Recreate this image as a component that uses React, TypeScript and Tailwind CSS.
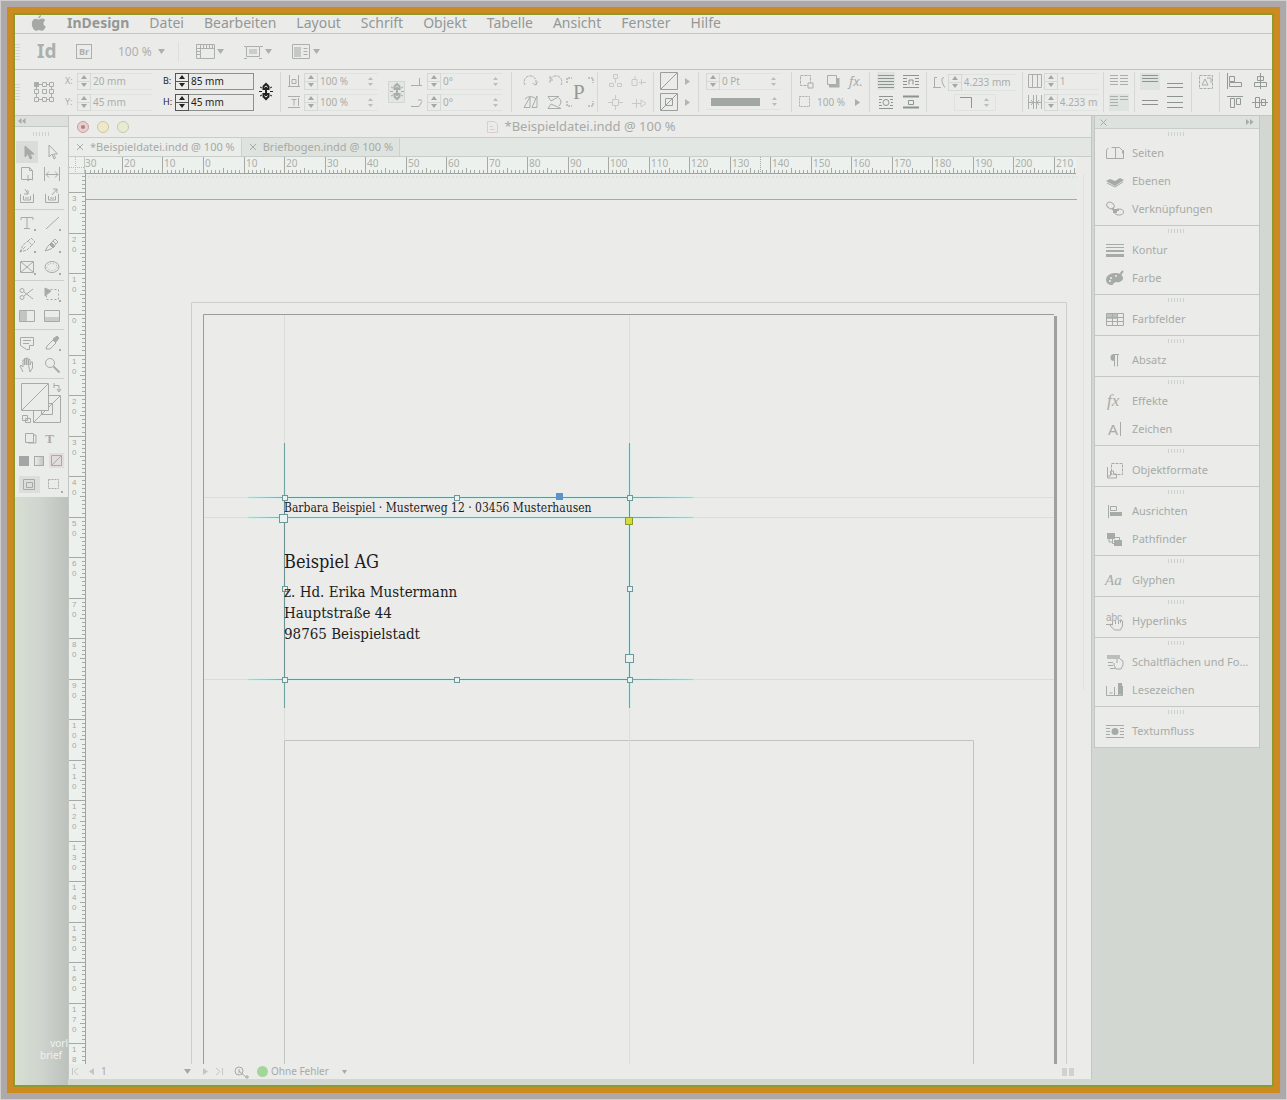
import type { ReactNode } from "react";

/* ---------- small building blocks ---------- */

function Icon({ w = 16, h = 16, className = "", children }: { w?: number; h?: number; className?: string; children: ReactNode }) {
  return (
    <svg width={w} height={h} viewBox={`0 0 ${w} ${h}`} fill="none" stroke="currentColor" strokeWidth="1" aria-hidden="true" className={`shrink-0 overflow-visible ${className}`}>
      {children}
    </svg>
  );
}

function IconButton({ label, className = "", children }: { label: string; className?: string; children: ReactNode }) {
  return (
    <button type="button" aria-label={label} title={label} className={`flex shrink-0 items-center justify-center ${className}`}>
      {children}
    </button>
  );
}

function Down() {
  return (
    <Icon w={7} h={5}>
      <path d="M0 0h7L3.500 5z" fill="currentColor" stroke="none" />
    </Icon>
  );
}

function UpDown() {
  return (
    <Icon w={5} h={9} className="text-[#b9beb9]">
      <path d="M2.500 0 5 3H0zM2.500 9 0 6h5z" fill="currentColor" stroke="none" />
    </Icon>
  );
}

function Divider() {
  return <span className="h-[40px] w-px shrink-0 bg-[#d5d9d5]" />;
}

function Pair({ className = "", children }: { className?: string; children: ReactNode }) {
  return <div className={`grid shrink-0 grid-rows-[19px_19px] items-center gap-[2px] ${className}`}>{children}</div>;
}

function Stepper({ name, dark }: { name: string; dark?: boolean }) {
  return (
    <span className={`flex h-[17px] w-[14px] shrink-0 flex-col border ${dark ? "border-[#555] text-[#222]" : "border-[#d5d9d5] text-[#a3a8a3]"}`}>
      <button type="button" aria-label={`${name} erhöhen`} className={`flex flex-1 items-center justify-center border-b ${dark ? "border-[#555]" : "border-[#d5d9d5]"}`}>
        <Icon w={6} h={4}><path d="M0 4h6L3 0z" fill="currentColor" stroke="none" /></Icon>
      </button>
      <button type="button" aria-label={`${name} verringern`} className="flex flex-1 items-center justify-center">
        <Icon w={6} h={4}><path d="M0 0h6L3 4z" fill="currentColor" stroke="none" /></Icon>
      </button>
    </span>
  );
}

function Field({ name, label, icon, value, dark, menu, width }: { name: string; label?: string; icon?: ReactNode; value: string; dark?: boolean; menu?: boolean; width: string }) {
  return (
    <div className={`flex h-[19px] items-center ${dark ? "text-[#1d1d1d]" : "text-[#a9aea9]"}`}>
      {label ? <label htmlFor={name} className="w-[12px] shrink-0 text-[9px]">{label}</label> : null}
      {icon ? <span className="flex w-[16px] shrink-0 items-center">{icon}</span> : null}
      <Stepper name={name} dark={dark} />
      <span className={`flex h-[17px] items-center border-y border-r ${width} ${dark ? "border-[#8d918d]" : "border-[#dfe3df] border-r-transparent"}`}>
        <input id={name} aria-label={name} defaultValue={value} className="w-full min-w-0 bg-transparent pl-[2px] text-[10px] outline-none" />
        {menu ? <span className="pr-1"><UpDown /></span> : null}
      </span>
    </div>
  );
}

function Grip() {
  return (
    <Icon w={18} h={4} className="text-[#cdd1cd]">
      <path d="M.5 0v4M3.500 0v4M6.500 0v4M9.500 0v4M12.500 0v4M15.500 0v4" />
    </Icon>
  );
}

function SideGrip() {
  return (
    <Icon w={5} h={17} className="text-[#d3d7d3]">
      <path d="M0 1.500h5M0 4.500h5M0 7.500h5M0 10.500h5M0 13.500h5M0 16.500h5" />
    </Icon>
  );
}

/* ---------- menu and application bars ---------- */

const menus = ["Datei", "Bearbeiten", "Layout", "Schrift", "Objekt", "Tabelle", "Ansicht", "Fenster", "Hilfe"];

function MenuBar() {
  return (
    <nav className="flex h-[19px] items-center border-b border-[#c3c6c3] pb-[2px] pl-4 text-[14px] leading-[16px] text-[#939895]">
      <button type="button" aria-label="Apple" className="mr-[20px] text-[#a5a9a6]">
        <Icon w={16} h={16}>
          <path d="M10 0c.2 1.700-1 3.300-2.600 3.500C7.200 1.900 8.500.4 10 0zM7.800 4.500c.8 0 1.800-.9 3.300-.9 1.300 0 2.500.7 3.200 1.700-2.700 1.600-2.300 5.200.5 6.300-.6 1.700-2.100 4.100-3.600 4.100-1.200 0-1.700-.8-3.200-.8-1.400 0-2 .8-3.100.8C3 15.700.8 12 .8 8.700c0-3.200 2-5 4-5 1.300 0 2.300.8 3 .8z" fill="currentColor" stroke="none" />
        </Icon>
      </button>
      <button type="button" className="mr-[20px] font-bold">InDesign</button>
      <div className="flex gap-[20px]">
        {menus.map((m) => (
          <button key={m} type="button">{m}</button>
        ))}
      </div>
    </nav>
  );
}

function AppBar() {
  return (
    <div className="flex h-[36px] items-center border-b border-[#bfc3bf] text-[#acb0ac]">
      <span className="w-[22px]"><SideGrip /></span>
      <span className="w-[39px] text-[19px] leading-none font-bold">Id</span>
      <button type="button" className="flex h-[15px] w-[16px] items-center justify-center border border-[#acb0ac] text-[9px] font-bold">Br</button>
      <label className="ml-[26px] flex items-center text-[12px]">
        <select aria-label="Zoomstufe" className="w-[40px] appearance-none bg-transparent" defaultValue="100 %">
          <option>100 %</option>
        </select>
        <Down />
      </label>
      <span className="mr-[17px] ml-[13px] h-[20px] w-px bg-[#dcdfdc]" />
      <div className="flex gap-[20px]">
        <IconButton label="Anzeigeoptionen" className="gap-[2px]">
          <Icon w={19} h={16}>
            <path d="M.5.5h18v4H.5zM.5.5h4v14h-4zM4.500 14.500h14v-10M7.500 1v3M10.500 1v3M13.500 1v3M16.500 1v3M1 7.500h3M1 10.500h3" />
          </Icon>
          <Down />
        </IconButton>
        <IconButton label="Bildschirmmodus" className="gap-[2px]">
          <Icon w={19} h={16}>
            <path d="M2.500 2.500h13v10h-13zM0 2.500h2M16 2.500h3M0 14.500h3M15 14.500h3" />
            <path d="M5 5h8v5H5z" fill="currentColor" opacity=".5" stroke="none" />
          </Icon>
          <Down />
        </IconButton>
        <IconButton label="Dokumente anordnen" className="gap-[2px]">
          <Icon w={19} h={16}>
            <path d="M.5.5h17v14H.5zM11.500 4.500h4M11.500 7.500h4M11.500 10.500h4" />
            <path d="M2 3h7v10H2z" fill="currentColor" opacity=".6" stroke="none" />
          </Icon>
          <Down />
        </IconButton>
      </div>
    </div>
  );
}

/* ---------- control panel ---------- */

function Chain() {
  return (
    <Icon w={14} h={17}>
      <path d="M4.500 7V3.500L7 1l2.500 2.500V7M4.500 10v3.500L7 16l2.500-2.500V10" strokeWidth="2" />
      <path d="M7 4v9M5 6h4M5 11h4" strokeWidth="2" />
      <path d="M1 4l2 1M0 8.500h3M1 13l2-1M13 4l-2 1M14 8.500h-3M13 13l-2-1" />
    </Icon>
  );
}

function ControlBar() {
  return (
    <div className="flex h-[46px] items-center overflow-hidden border-b border-[#c3c7c3] pb-[2px] text-[#a9aea9]">
      <span className="w-[19px] shrink-0"><SideGrip /></span>
      <IconButton label="Bezugspunkt" className="mr-[11px]">
        <Icon w={20} h={20}>
          <path d="M.5.5h4v4h-4z" fill="currentColor" />
          <path d="M8.500.5h4v4h-4zM15.500.5h4v4h-4zM.5 7.500h4v4h-4zM8.500 7.500h4v4h-4zM15.500 7.500h4v4h-4zM.5 15.500h4v4h-4zM8.500 15.500h4v4h-4zM15.500 15.500h4v4h-4zM5 2.500h3M13 2.500h2M5 17.500h3M13 17.500h2M2.500 5v2M2.500 12v3M17.500 5v2M17.500 12v3" />
        </Icon>
      </IconButton>
      <Pair className="mr-[10px]">
        <Field name="X-Position" label="X:" value="20 mm" width="w-[62px]" />
        <Field name="Y-Position" label="Y:" value="45 mm" width="w-[62px]" />
      </Pair>
      <Pair className="mr-[5px]">
        <Field name="Breite" label="B:" value="85 mm" dark width="w-[65px]" />
        <Field name="Höhe" label="H:" value="45 mm" dark width="w-[65px]" />
      </Pair>
      <IconButton label="Proportionen" className="mr-[7px] text-[#222]"><Chain /></IconButton>
      <Divider />
      <Pair className="ml-[7px] mr-[10px]">
        <Field name="Skalierung X" value="100 %" menu width="w-[60px]" icon={<Icon w={12} h={12}><path d="M1.500 0v12M10.500 0v12M0 11.500h12M4 4.500h4v4H4z" /></Icon>} />
        <Field name="Skalierung Y" value="100 %" menu width="w-[60px]" icon={<Icon w={12} h={12}><path d="M0 .5h12M0 11.500h12M3.500 3.500h5M6 3.500v6M10.500 2v8" /></Icon>} />
      </Pair>
      <IconButton label="Skalierung verknüpfen" className="mr-[6px] h-[22px] w-[17px] border border-[#d3d7d3] bg-[#e3e6e3]"><Chain /></IconButton>
      <Pair className="mr-[8px]">
        <Field name="Drehwinkel" value="0°" menu width="w-[62px]" icon={<Icon w={12} h={12}><path d="M0 10.500h11M8.500 3v7" /></Icon>} />
        <Field name="Scherwinkel" value="0°" menu width="w-[62px]" icon={<Icon w={12} h={12}><path d="M0 10.500h8l3-5M7 4h4" /></Icon>} />
      </Pair>
      <Divider />
      <Pair className="ml-[6px] mr-[2px] grid-cols-[26px_18px]">
        <IconButton label="Im Uhrzeigersinn drehen"><Icon><path d="M2 12A6 6 0 1 1 13 10M13 12l2-4M13 12l-4-2" strokeDasharray="3 1" /></Icon></IconButton>
        <IconButton label="Gegen Uhrzeigersinn drehen"><Icon><path d="M14 12A6 6 0 1 0 3 10M3 3v4h4" strokeDasharray="3 1" /></Icon></IconButton>
        <IconButton label="Horizontal spiegeln"><Icon><path d="M1 13.500 7 3v10.500zM9 13.500h5V2zM2 5q5-5 11 0" /></Icon></IconButton>
        <IconButton label="Vertikal spiegeln"><Icon><path d="M1 2.500h11L4 7zM1 14.500h13L4 10zM12 4q4 4 0 8" /></Icon></IconButton>
      </Pair>
      <IconButton label="Zeichenattribute" className="mr-[3px]">
        <Icon w={28} h={30} className="text-[#949995]">
          <path d="M1 6V1h5M22 1h5v5M1 24v5h5M22 29h5v-5" strokeDasharray="2 1" />
          <text x="7" y="22" fontSize="21" fontFamily="Liberation Serif, serif" fill="currentColor" stroke="none">P</text>
        </Icon>
      </IconButton>
      <Divider />
      <Pair className="ml-[5px] mr-[3px] grid-cols-[23px_22px] text-[#c6cbc6]">
        <IconButton label="Container auswählen"><Icon><path d="M6.500 1.500h4v4h-4zM8.500 6v4M2.500 10.500h4v3h-4zM10.500 10.500h4v3h-4z" /></Icon></IconButton>
        <IconButton label="Vorheriges Objekt"><Icon><path d="M1 6.500h5v6H1zM10.500 6v6M8 9.500h7M4 3v3" /></Icon></IconButton>
        <IconButton label="Inhalt auswählen"><Icon><path d="M5.500 5.500h6v6h-6zM8.500 1v4M8.500 12v4M1 8.500h4M12 8.500h4" /></Icon></IconButton>
        <IconButton label="Nächstes Objekt"><Icon><path d="M1 9.500h9M5.500 5v9M10 6v7l5-3.500z" /></Icon></IconButton>
      </Pair>
      <Divider />
      <Pair className="ml-[6px] mr-[4px] grid-cols-[18px_14px] gap-x-[2px] text-[#9b9f9b]">
        <IconButton label="Fläche"><Icon w={18} h={18}><path d="M.5.5h17v17H.5zM1 17 17 1" /></Icon></IconButton>
        <IconButton label="Flächenmenü"><Icon w={5} h={7} className="text-[#b3b7b3]"><path d="M0 0v7l5-3.500z" fill="currentColor" stroke="none" /></Icon></IconButton>
        <IconButton label="Kontur"><Icon w={18} h={18}><path d="M.5.5h17v17H.5zM5.500 5.500h7v7h-7zM1 17 17 1" /></Icon></IconButton>
        <IconButton label="Konturmenü"><Icon w={5} h={7} className="text-[#b3b7b3]"><path d="M0 0v7l5-3.500z" fill="currentColor" stroke="none" /></Icon></IconButton>
      </Pair>
      <Divider />
      <Pair className="ml-[7px] mr-[10px]">
        <Field name="Konturstärke" value="0 Pt" menu width="w-[61px]" />
        <button type="button" aria-label="Konturtyp" className="flex h-[15px] items-center gap-[12px] border-b border-[#dfe3df] pl-[5px]">
          <span className="h-[8px] w-[49px] bg-[#a3a7a3]" />
          <UpDown />
        </button>
      </Pair>
      <Divider />
      <div className="mr-[6px] ml-[7px] flex shrink-0 flex-col gap-[2px]">
        <div className="flex h-[19px] items-center gap-[9px]">
          <IconButton label="Eckenoptionen"><Icon><path d="M1.500 2.500h10v10h-10z" strokeDasharray="3 1" /><path d="M9 10h5v5H9z" fill="#ebebea" /></Icon></IconButton>
          <IconButton label="Schlagschatten"><Icon><path d="M3.500 2.500h9v9h-9z" /><path d="M5 13h9V5" strokeWidth="3" /></Icon></IconButton>
          <button type="button" className="text-[13px] leading-none italic">fx.</button>
        </div>
        <div className="flex h-[19px] items-center">
          <Icon w={18} h={12}><path d="M.5.5h10v10H.5z" strokeDasharray="2 1" /></Icon>
          <input aria-label="Deckkraft" defaultValue="100 %" className="w-[38px] bg-transparent text-[10px] outline-none" />
          <Icon w={5} h={7}><path d="M0 0v7l5-3.500z" fill="currentColor" stroke="none" /></Icon>
        </div>
      </div>
      <Divider />
      <Pair className="mr-[6px] ml-[7px] grid-cols-[18px_18px] gap-x-[7px] text-[#8f938f]">
        <IconButton label="Kein Umfluss" className="h-[18px] bg-[#dfe3df]"><Icon><path d="M0 2.500h16M0 5.500h16M0 8.500h16M0 11.500h16M0 14.500h16" /></Icon></IconButton>
        <IconButton label="Umfluss Rahmen"><Icon><path d="M0 2.500h16M0 5.500h4M12 5.500h4M0 8.500h4M12 8.500h4M0 11.500h4M12 11.500h4M0 14.500h16M6 11.500V7h4v4.500" /></Icon></IconButton>
        <IconButton label="Umfluss Form"><Icon><path d="M1 2.500h14M1 5.500h3M12 5.500h3M1 8.500h2M13 8.500h2M1 11.500h3M12 11.500h3M1 14.500h14" /><circle cx="8" cy="8.500" r="3" /></Icon></IconButton>
        <IconButton label="Objekt überspringen"><Icon><path d="M0 2.500h16M0 13.500h16" strokeWidth="2" /><path d="M5.500 10.500V6.500h5v4z" /></Icon></IconButton>
      </Pair>
      <Divider />
      <div className="mr-[5px] ml-[5px] flex shrink-0 flex-col gap-[2px]">
        <Field name="Eckengröße" value="4.233 mm" width="w-[55px]" icon={<Icon w={14} h={14}><path d="M2.500 13V2.500H5M1 12.500h8M12 2.500q-3 0-2 4t3 6" /></Icon>} />
        <button type="button" aria-label="Eckenform" className="ml-[22px] flex h-[17px] w-[42px] items-center justify-around border border-[#dfe3df]">
          <Icon w={13} h={12} className="text-[#909590]"><path d="M0 1.500h11.500V12" /></Icon>
          <UpDown />
        </button>
      </div>
      <Divider />
      <Pair className="mr-[4px] ml-[5px]">
        <Field name="Spaltenanzahl" value="1" width="w-[41px]" icon={<Icon w={14} h={14}><path d="M.5.5h4v13h-4zM4.500.5h5v13h-5zM9.500.5h4v13h-4z" /></Icon>} />
        <Field name="Steg" value="4.233 mm" width="w-[41px]" icon={<Icon w={14} h={14}><path d="M.5 0v14M5.500 0v14M8.500 0v14M13.500 0v14M1 7.500h12M3 5l2 2.500L3 10M11 5 9 7.500 11 10" /></Icon>} />
      </Pair>
      <Divider />
      <Pair className="mr-[5px] ml-[5px]">
        <IconButton label="Spalten ausgleichen"><Icon w={18} h={14}><path d="M0 1.500h8M10 1.500h8M0 4.500h8M10 4.500h8M0 7.500h8M10 7.500h8M0 10.500h8M10 10.500h8" /></Icon></IconButton>
        <IconButton label="Spalten nicht ausgleichen" className="h-[17px] w-[20px] bg-[#dfe3df]"><Icon w={18} h={14}><path d="M0 1.500h8M10 1.500h8M0 4.500h8M10 4.500h8M0 7.500h8M0 10.500h8" /></Icon></IconButton>
      </Pair>
      <Divider />
      <Pair className="mr-[6px] ml-[5px] grid-cols-[20px_20px] gap-x-[5px] text-[#8f938f]">
        <IconButton label="Oben ausrichten" className="h-[17px] bg-[#dfe3df]"><Icon><path d="M0 2.500h16M0 5.500h16M0 8.500h16" /></Icon></IconButton>
        <IconButton label="Unten ausrichten"><Icon><path d="M0 10.500h16M0 14.500h16" /></Icon></IconButton>
        <IconButton label="Zentrieren"><Icon><path d="M0 6.500h16M0 10.500h16" /></Icon></IconButton>
        <IconButton label="Vertikaler Blocksatz"><Icon><path d="M0 2.500h16M0 8.500h16M0 13.500h16" /></Icon></IconButton>
      </Pair>
      <Divider />
      <IconButton label="Rahmen anpassen" className="mr-[5px] ml-[6px] mb-[20px]"><Icon><path d="M1.500 1.500h13v13h-13z" strokeDasharray="3 1" /><path d="M4 11 7 5l3 6zM9 4h4v5" /></Icon></IconButton>
      <Divider />
      <Pair className="ml-[6px] grid-cols-[18px_18px] gap-x-[7px] text-[#959995]">
        <IconButton label="Linke Kanten"><Icon><path d="M.5 0v16M2.500 3.500h5v5h-5zM2.500 9.500h12v4h-12z" /></Icon></IconButton>
        <IconButton label="Horizontal mittig"><Icon><path d="M8.500 0v16M5.500 3.500h6v4h-6zM2.500 9.500h12v4h-12z" /></Icon></IconButton>
        <IconButton label="Obere Kanten"><Icon><path d="M0 2.500h16M3.500 4.500h4v9h-4zM9.500 4.500h4v6h-4z" /></Icon></IconButton>
        <IconButton label="Vertikal mittig"><Icon><path d="M0 8.500h16M3.500 3.500h4v10h-4zM9.500 5.500h4v6h-4z" /></Icon></IconButton>
      </Pair>
    </div>
  );
}

/* ---------- tools ---------- */

type Tool = { label: string; art: ReactNode; active?: boolean };

const toolSections: Tool[][] = [
  [
    { label: "Auswahl", active: true, art: <path d="M6 2v11l3-3 2 5 2-1-2-4h4z" fill="currentColor" /> },
    { label: "Direktauswahl", art: <path d="M5 1v12l3-3 2 5 1.500-1-2-4h4z" /> },
    { label: "Seite", art: <path d="M2.500 1.500h8l3 3v9h-11zM10.500 1.500v3h3M9 9v6l2-2 3 1" /> },
    { label: "Lücke", art: <path d="M.5 1v14M15.500 1v14M2 8.500h12M5 5.500 2 8.500l3 3M11 5.500l3 3-3 3" /> },
    { label: "Inhaltsaufnahme", art: <path d="M1.500 6v8.500h13V6M4.500 8v4h7V8M6 1l3 5M9 2v4H5M6 10h4" /> },
    { label: "Inhaltsplatzierung", art: <path d="M1.500 6v8.500h13V6M4.500 8v4h7V8M8 7l5-6M9 1h4v4M6 10h4" /> },
  ],
  [
    { label: "Text", art: <path d="M2 5V2.500h12V5M8 2.500v11M5 13.500h6" /> },
    { label: "Linie", art: <path d="M2 14 15 2" /> },
    { label: "Zeichenstift", art: <path d="M1 15l3-7 5-4 4 4-5 5zM9 4l3-3 4 4-3 3M1 15l6-6" strokeDasharray="3 1" /> },
    { label: "Buntstift", art: <><path d="m1 14 3-5 7-7 3 3-7 7zM9 4l3 3" /><path d="m6 8 3 3 2-2-3-3z" fill="currentColor" /></> },
    { label: "Rechteckrahmen", art: <path d="M1.500 2.500h13v11h-13zM2 3l12 10M14 3 2 13" /> },
    { label: "Ellipse", art: <><ellipse cx="8" cy="8" rx="7" ry="5.500" /><ellipse cx="8" cy="8" rx="5" ry="3.500" strokeDasharray="1 2" /></> },
  ],
  [
    { label: "Schere", art: <path d="M14 3 5 10M14 13 5 6M1 4.500a2 2 0 1 0 4 0 2 2 0 1 0-4 0M1 11.500a2 2 0 1 0 4 0 2 2 0 1 0-4 0" /> },
    { label: "Frei transformieren", art: <><path d="M2.500 3.500h12v10h-12z" strokeDasharray="2 2" /><path d="M1 2v8l6-5z" fill="currentColor" /></> },
    { label: "Verlaufsfarbfeld", art: <><path d="M1 3h7v10H1z" fill="currentColor" opacity=".6" stroke="none" /><path d="M.5 2.500h15v11H.5z" /></> },
    { label: "Weiche Verlaufskante", art: <><path d="M1 9h14v4H1z" fill="currentColor" opacity=".5" stroke="none" /><path d="M.5 2.500h15v11H.5z" /></> },
  ],
  [
    { label: "Notiz", art: <path d="M1.500 2.500h13v8h-4v4h-3l-6-4zM4 5.500h8M4 8.500h6" /> },
    { label: "Pipette", art: <><path d="m2 14 1-3 6-6 3 3-6 6z" /><path d="m9 4 4-3 2 2-3 4z" fill="currentColor" /></> },
    { label: "Hand", art: <path d="M4 15 1 9l1-1 2 2V3l1.500 0V8M5.500 8V1.500H7V8M7.500 8V1H9v7M9.500 8V2.500H11V8l1-3h1.500v6L11 15z" /> },
    { label: "Zoom", art: <><circle cx="6" cy="6" r="4.500" /><path d="m9.500 9.500 6 6" strokeWidth="2" /></> },
  ],
];

function Toolbox() {
  return (
    <aside aria-label="Werkzeuge" className="bg-[#eaecea] text-[#a6aba8]">
      <div className="flex h-[11px] items-center border-b border-[#c6cac6] bg-[#dde0dd] pl-[3px]">
        <Icon w={8} h={6}><path d="M3.500 0v6L0 3zM7.500 0v6L4 3z" fill="currentColor" stroke="none" /></Icon>
      </div>
      <div className="flex h-[12px] items-end justify-center pb-[3px]"><Grip /></div>
      {toolSections.map((section, i) => (
        <div key={i} className="mr-1 grid grid-cols-2 justify-items-center border-b border-[#ccd0cc] py-[2px]">
          {section.map((t) => (
            <IconButton key={t.label} label={t.label} className={`h-[22px] w-[22px] ${t.active ? "bg-[#d9dcd9]" : ""}`}>
              <Icon>
                {t.art}
                {i === 1 || t.label === "Pipette" || t.label === "Frei transformieren" ? <path d="M15 14h2v2h-2z" fill="currentColor" stroke="none" /> : null}
              </Icon>
            </IconButton>
          ))}
        </div>
      ))}
      <div className="flex h-[49px] items-center justify-center">
        <IconButton label="Fläche und Kontur">
          <Icon w={42} h={43}>
            <path d="M12.500 13.500h27v27h-27zM20.500 21.500h11v11h-11zM13 40l26-26" />
            <path d="M.5 1.500h27v27H.5z" fill="#eaecea" />
            <path d="M1 28 27 2M33 3.500h5V9M33 1v5M36 7l2 3 2-3" />
            <path d="M1.500 33.500h5v5h-5zM4.500 36.500h5v4h-5z" />
          </Icon>
        </IconButton>
      </div>
      <div className="flex h-[20px] items-center justify-center gap-[8px] pr-[5px]">
        <IconButton label="Formatierung Container"><Icon w={13} h={13}><path d="M1.500 1.500h8v9h-8zM10 3h2v8H4" /></Icon></IconButton>
        <button type="button" className="font-['Liberation_Serif',serif] text-[13px] leading-none font-bold">T</button>
      </div>
      <div className="flex h-[25px] items-center justify-center gap-[5px]">
        <IconButton label="Farbe anwenden"><span className="h-[10px] w-[10px] bg-[#a3a5a7]" /></IconButton>
        <IconButton label="Verlauf anwenden"><span className="h-[10px] w-[10px] border border-current bg-linear-to-r from-[#ebebea] to-[#c3c6c3]" /></IconButton>
        <IconButton label="Keine" className="h-[15px] w-[15px] bg-[#e2dcda]"><Icon w={11} h={11}><path d="M.5.5h10v10H.5zM1 10l9-9" /></Icon></IconButton>
      </div>
      <div className="mb-[2px] flex h-[22px] items-center justify-center gap-[4px]">
        <IconButton label="Normal" className="h-[17px] w-[21px] bg-[#dbdedb]"><Icon w={13} h={13}><path d="M.5 1.500h11v10H.5zM3.500 4.500h6v5h-6z" /></Icon></IconButton>
        <IconButton label="Vorschau" className="h-[17px] w-[21px]"><Icon w={13} h={13}><path d="M.5 1.500h10v9H.5z" strokeDasharray="2 1" /><path d="M13 13h2v2h-2z" fill="currentColor" stroke="none" /></Icon></IconButton>
      </div>
    </aside>
  );
}

/* ---------- rulers ---------- */

const MM = 4.052;

function tickPath(from: number, to: number, vertical: boolean, origin: number) {
  let d = "";
  for (let u = from; u <= to; u++) {
    const p = Math.round(origin + u * MM) + 0.5;
    const len = u % 10 === 0 ? 16 : u % 5 === 0 ? 5 : 3;
    d += vertical ? `M${16 - len} ${p}H16` : `M${p} ${16 - len}V16`;
  }
  return d;
}

function HorizontalRuler() {
  const labels = Array.from({ length: 25 }, (_, i) => i - 3);
  return (
    <div className="relative mr-[15px] h-[17px] flex-1 overflow-hidden border-b border-[#9fa39f] bg-[#edf1ed]">
      <svg width="100%" height="16" aria-hidden="true" className="absolute inset-0 text-[#a6aaa6]" stroke="currentColor">
        <path d={tickPath(-29, 215, false, 118)} />
        <path d="M675.500 0v16" strokeDasharray="1 1" />
        <g fill="#abafab" stroke="none" fontSize="10">
          {labels.map((n) => (
            <text key={n} x={Math.max(0, Math.round(118 + n * 10 * MM) + 2)} y="10">{Math.abs(n * 10) || 0}</text>
          ))}
        </g>
      </svg>
    </div>
  );
}

function VerticalRuler() {
  const labels = Array.from({ length: 22 }, (_, i) => i - 3);
  return (
    <div className="relative w-[17px] shrink-0 overflow-hidden border-r border-[#9fa39f] bg-[#edf1ed]">
      <svg width="16" height="100%" aria-hidden="true" className="absolute inset-0 text-[#a6aaa6]" stroke="currentColor">
        <path d={tickPath(-34, 190, true, 140)} />
        <g fill="#a4a8a4" stroke="none" fontSize="8" fontFamily="Liberation Sans, sans-serif">
          {labels.map((n) =>
            String(Math.abs(n * 10)).split("").map((c, i) => (
              <text key={`${n}-${i}`} x="3" y={Math.round(140 + n * 10 * MM) + 9 + i * 10}>{c}</text>
            )),
          )}
        </g>
      </svg>
    </div>
  );
}

/* ---------- document ---------- */

function Handle({ x, y, s = 5 }: { x: number; y: number; s?: number }) {
  return <rect x={x - Math.floor(s / 2) + 0.5} y={y - Math.floor(s / 2) + 0.5} width={s} height={s} fill="#ebf1f1" stroke="#6b989b" />;
}

function Canvas() {
  return (
    <main className="relative min-h-[600px] flex-1 overflow-hidden bg-[#ebebea]">
      <svg width="100%" height="100%" className="absolute inset-0" fill="none" aria-hidden="true">
        <defs>
          <linearGradient id="fadeH" gradientUnits="userSpaceOnUse" x1="248" x2="693" y1="0" y2="0">
            <stop offset="0" stopColor="#7fbfc0" stopOpacity=".5" />
            <stop offset=".08" stopColor="#6aaeb0" />
            <stop offset=".9" stopColor="#6aaeb0" />
            <stop offset="1" stopColor="#7fbfc0" stopOpacity=".6" />
          </linearGradient>
          <pattern id="dots" width="4" height="4" patternUnits="userSpaceOnUse">
            <path d="M1 0v2" stroke="#d3d7d3" />
          </pattern>
        </defs>
        <g transform="translate(-86 -174)">
          <rect x="86" y="174" width="991" height="25" fill="#e8ebe7" />
          <rect x="86" y="174" width="991" height="6" fill="url(#dots)" />
          <path d="M86 199.500H1077" stroke="#a5aaa5" />
          <path d="M1083.500 174V690" stroke="#dfe2df" />
          <path d="M191.500 1200V302.500H1066.500V1200" stroke="#cdcfcd" />
          <path d="M203.500 1200V314.500H1054" stroke="#999c99" />
          <path d="M1055.500 316V1200" stroke="#9fa19f" strokeWidth="3" />
          <path d="M284.500 1200V740.500H973.500V1200" stroke="#bfc3c1" />
          <path d="M284.500 315V740M629.500 315V1200M204 497.500H1054M204 517.500H1054M204 679.500H1054" stroke="#d9dedb" />
          <path d="M284.500 443V708M629.500 443V708" stroke="#d6ecea" strokeWidth="3" />
          <path d="M248 497.500H693M248 517.500H693M248 679.500H693" stroke="#daeeec" strokeWidth="3" />
          <path d="M284.500 443V708M629.500 443V708" stroke="#6fa5a4" />
          <path d="M248 497H693V498H248zM248 517H693V518H248zM248 679H693V680H248z" fill="url(#fadeH)" />
          <path d="M284.500 497.500H629.500V679.500H284.500z" stroke="#6b9394" />
          <Handle x={284} y={497} />
          <Handle x={456} y={497} />
          <Handle x={629} y={497} />
          <Handle x={284} y={588} />
          <Handle x={629} y={588} />
          <Handle x={284} y={679} />
          <Handle x={456} y={679} />
          <Handle x={629} y={679} />
          <Handle x={283} y={518} s={8} />
          <Handle x={629} y={658} s={8} />
          <rect x="556" y="493" width="7" height="7" fill="#5d94c8" />
          <rect x="625.500" y="517.500" width="7" height="7" fill="#d3dc3c" stroke="#8c9a2c" />
        </g>
      </svg>
      <div className="absolute top-[326px] left-[198px] font-['DejaVu_Serif_Condensed','DejaVu_Serif',serif] whitespace-nowrap text-[#1c1c1c]">
        <p className="text-[12px] leading-[16px]">Barbara Beispiel · Musterweg 12 · 03456 Musterhausen</p>
        <p className="mt-[34px] text-[18px] leading-[24px]">Beispiel AG</p>
        <p className="mt-[8px] text-[15px] leading-[21px]">
          z. Hd. Erika Mustermann<br />Hauptstraße 44<br />98765 Beispielstadt
        </p>
      </div>
    </main>
  );
}

function Tab({ title, active }: { title: string; active?: boolean }) {
  return (
    <div className={`flex h-full items-center gap-[7px] border-r border-[#cdd1cd] pr-[6px] pl-[8px] ${active ? "bg-[#ebedeb]" : "bg-[#dfe3df]"}`}>
      <IconButton label={`${title} schließen`}><Icon w={6} h={6}><path d="m0 0 6 6M6 0 0 6" /></Icon></IconButton>
      <button type="button">{title}</button>
    </div>
  );
}

function DocumentWindow() {
  return (
    <section className="mb-[6px] flex min-w-0 flex-1 flex-col border-x border-[#c3c7c3] bg-[#ebebea]">
      <header className="flex h-[21px] shrink-0 items-center text-[13px] text-[#a6aaa6]">
        <div className="flex w-[64px] gap-[8px] pl-[8px]">
          <button type="button" aria-label="Schließen" className="flex h-[12px] w-[12px] shrink-0 items-center justify-center rounded-full border border-[#c9a0a0] bg-[#e8cfcf]"><span className="h-1 w-1 rounded-full bg-[#b97c7c]" /></button>
          <button type="button" aria-label="Minimieren" className="h-[12px] w-[12px] shrink-0 rounded-full border border-[#cdc9a0] bg-[#eceacb]" />
          <button type="button" aria-label="Maximieren" className="h-[12px] w-[12px] shrink-0 rounded-full border border-[#c3cba6] bg-[#e8ebd3]" />
        </div>
        <div className="flex flex-1 items-center justify-center gap-[5px] pr-[62px]">
          <Icon w={13} h={14} className="text-[#dccdca]"><path d="M1.500 1.500h7l3 3v8h-10zM4 9.500h5M4 6.500h3" /></Icon>
          <h1>*Beispieldatei.indd @ 100 %</h1>
        </div>
      </header>
      <div className="flex h-[20px] shrink-0 items-center border-y border-[#c9cdc9] bg-[#e3e7e3] text-[11px] text-[#a6aaa6]">
        <Tab title="*Beispieldatei.indd @ 100 %" active />
        <Tab title="Briefbogen.indd @ 100 %" />
      </div>
      <div className="flex shrink-0">
        <div className="h-[17px] w-[16px] shrink-0 border-r border-b border-[#c3c7c3] bg-[#edf1ed]">
          <Icon w={16} h={16} className="text-[#b9bdb9]"><path d="M0 10.500h16M6.500 0v16" strokeDasharray="1 1" /></Icon>
        </div>
        <HorizontalRuler />
      </div>
      <div className="flex flex-1">
        <VerticalRuler />
        <Canvas />
      </div>
      <footer className="flex h-[15px] shrink-0 items-center text-[10px] text-[#a6aaa6]">
        <IconButton label="Erste Seite" className="ml-[3px] text-[#c3c7c3]"><Icon w={7} h={7}><path d="M.5 0v7M6 0 2 3.500 6 7" /></Icon></IconButton>
        <IconButton label="Vorherige Seite" className="ml-[10px] text-[#c3c7c3]"><Icon w={5} h={7}><path d="M5 0v7L0 3.500z" fill="currentColor" stroke="none" /></Icon></IconButton>
        <select aria-label="Seite" defaultValue="1" className="ml-[7px] w-[83px] appearance-none bg-transparent">
          <option>1</option>
        </select>
        <Down />
        <IconButton label="Nächste Seite" className="ml-[12px] text-[#c3c7c3]"><Icon w={5} h={7}><path d="M0 0v7l5-3.500z" fill="currentColor" stroke="none" /></Icon></IconButton>
        <IconButton label="Letzte Seite" className="ml-[8px] text-[#c3c7c3]"><Icon w={7} h={7}><path d="M6.500 0v7M0 0l4 3.500L0 7" /></Icon></IconButton>
        <IconButton label="Preflight" className="ml-[11px]"><Icon w={14} h={12}><circle cx="5" cy="5" r="4" /><path d="m5 5 7 6M5 3v4M12 10h2v2h-2z" /></Icon></IconButton>
        <span className="ml-[9px] h-[11px] w-[11px] rounded-full bg-[#a3d69b]" />
        <button type="button" className="ml-[3px] flex items-center gap-[13px]">Ohne Fehler <Icon w={5} h={4}><path d="M0 0h5L2.500 4z" fill="currentColor" stroke="none" /></Icon></button>
        <span className="mr-[17px] ml-auto flex gap-[2px]"><span className="h-[8px] w-[5px] bg-[#cfd2cf]" /><span className="h-[8px] w-[5px] bg-[#cfd2cf]" /></span>
      </footer>
    </section>
  );
}

/* ---------- panel dock ---------- */

const fill = { fill: "currentColor", stroke: "none" };

const panelGroups: { label: string; art: ReactNode }[][] = [
  [
    { label: "Seiten", art: <path d="M.5 5v8.500h17V5M5.500 2.500h4v11M9.500 2.500h4l3 3v3M.5 5l2-2" /> },
    { label: "Ebenen", art: <><path {...fill} d="m0 8 4-2 5 2 5-3 4 2-9 6z" /><path d="m1 10 8 4 8-5" /></> },
    { label: "Verknüpfungen", art: <><ellipse cx="4.500" cy="4.500" rx="4" ry="3" transform="rotate(35 4.500 4.500)" /><ellipse cx="13" cy="11" rx="4.500" ry="3" /><path d="m6 7 4 5M8 9h5M7 11h4" strokeWidth="2" /></> },
  ],
  [
    { label: "Kontur", art: <><path d="M0 2.500h18M0 5.500h18" /><path d="M0 9h18" strokeWidth="2" /><path d="M0 13.500h18" strokeWidth="3" /></> },
    { label: "Farbe", art: <><path {...fill} d="M9 3C4 3 0 6 0 10c0 3 3 5 6 5 2 0 1-3 4-3 3 1 7-1 7-4 0-3-4-5-8-5zM4 8a1 1 0 1 1 2 0 1 1 0 0 1-2 0zm5-2a1 1 0 1 1 2 0 1 1 0 0 1-2 0zM3 11a1 1 0 1 1 2 0 1 1 0 0 1-2 0z" fillRule="evenodd" /><path d="M8 12 17 1" strokeWidth="2" /></> },
  ],
  [{ label: "Farbfelder", art: <><path {...fill} d="M1 3h10v5H1z" opacity=".7" /><path d="M.5 2.500h17v12H.5zM6.500 2.500v12M11.500 2.500v12M.5 6.500h17M.5 10.500h17" /></> }],
  [{ label: "Absatz", art: <><path d="M8 2.500h5M8.500 2.500v12M11.500 2.500v12" /><path {...fill} d="M8 2a3.500 3.500 0 0 0 0 7z" /></> }],
  [
    { label: "Effekte", art: <text {...fill} x="1" y="13" fontSize="17" fontStyle="italic" fontFamily="Liberation Serif, serif">fx</text> },
    { label: "Zeichen", art: <><text {...fill} x="2" y="14" fontSize="15" fontFamily="Liberation Sans, sans-serif">A</text><path d="M14.500 1v14" /></> },
  ],
  [{ label: "Objektformate", art: <><path d="M5.500 1.500h11v11h-11z" strokeDasharray="3 1" /><path d="M1.500 5v11h9v-4h-3v-3h-3v5h-3" /></> }],
  [
    { label: "Ausrichten", art: <><path d="M2.500 2v13M4.500 3.500h6v4h-6z" /><path {...fill} d="M4 9h12v4H4z" /></> },
    { label: "Pathfinder", art: <><path {...fill} d="M1 2h8v6H1zM8 9h8v6H8z" /><path d="M6.500 6.500h7v6h-7zM3 8v3h4" /></> },
  ],
  [{ label: "Glyphen", art: <text {...fill} x="-1" y="13" fontSize="15" fontStyle="italic" fontFamily="Liberation Serif, serif">Aa</text> }],
  [{ label: "Hyperlinks", art: <><text {...fill} x="0" y="8" fontSize="10" fontFamily="Liberation Sans, sans-serif">abc</text><path d="M6.500 8v4l-2-1v2l4 4h6l2-4V8l-2-1v3M9.500 8v3M12.500 8v3M0 11.500h4" /></> }],
  [
    { label: "Schaltflächen und Fo…", art: <><path {...fill} d="M1 1h13v4H1z" opacity=".7" /><path d="M2 8.500h5M2 11.500h5M4 14.500h5M8 9v2l2 4h5l2-4V7l-3-2M11 5v4" /></> },
    { label: "Lesezeichen", art: <><path d="M.5 4v9.500h16V4M3.500 11h3M8.500 5v8" /><path {...fill} d="M12 1h4v13l-2-2-2 2z" /></> },
  ],
  [{ label: "Textumfluss", art: <><path d="M0 2.500h18M0 5.500h4M14 5.500h4M0 8.500h4M14 8.500h4M0 11.500h4M14 11.500h4M0 14.500h18" /><circle {...fill} cx="9" cy="8.500" r="3.500" /></> }],
];

function PanelDock() {
  return (
    <aside aria-label="Bedienfelder" className="mr-3 ml-[2px] w-[166px] shrink-0 self-start border-x border-[#c3c7c3] bg-[#ebebea] text-[11px] text-[#a6aba6]">
      <div className="flex h-[13px] items-center justify-between border-b border-[#c9cdc9] bg-[#dde2de] px-[5px]">
        <IconButton label="Schließen"><Icon w={7} h={7}><path d="m.5.5 6 6M6.500.5l-6 6" /></Icon></IconButton>
        <IconButton label="Auf Symbole minimieren"><Icon w={8} h={6}><path d="M0 0v6l3.500-3zM4 0v6l3.500-3z" fill="currentColor" stroke="none" /></Icon></IconButton>
      </div>
      {panelGroups.map((group) => (
        <div key={group[0].label} className="border-b border-[#c3c8c4] pb-[2px]">
          <div className="flex h-[10px] items-center justify-center"><Grip /></div>
          {group.map((p) => (
            <button key={p.label} type="button" className="flex h-7 w-full items-center gap-[8px] pl-[11px] whitespace-nowrap">
              <Icon w={18} h={17}>{p.art}</Icon>
              {p.label}
            </button>
          ))}
        </div>
      ))}
    </aside>
  );
}

/* ---------- application ---------- */

export default function App() {
  return (
    <div className="flex min-h-screen flex-col border border-[#cfcfcf] bg-[#aea9a8] p-[6px] font-['Noto_Sans',sans-serif]">
      <div className="flex flex-1 flex-col border-6 border-[#cd8a20] bg-[#8f9a2c] p-[2px]">
        <div className="flex min-w-0 flex-1 flex-col bg-[#ebebea]">
          <MenuBar />
          <AppBar />
          <ControlBar />
          <div className="flex flex-1 bg-[#d3d7d1]">
            <div className="flex w-[53px] shrink-0 flex-col justify-between bg-linear-to-r from-[#d6dfd2] via-[#d0d4cf] to-[#bcc1bc]">
              <Toolbox />
              <p className="overflow-hidden pb-[24px] text-right text-[10px] leading-[12px] text-[#f0f2f0]">vorl<br /><span className="pr-[6px]">brief</span></p>
            </div>
            <DocumentWindow />
            <PanelDock />
          </div>
        </div>
      </div>
    </div>
  );
}
